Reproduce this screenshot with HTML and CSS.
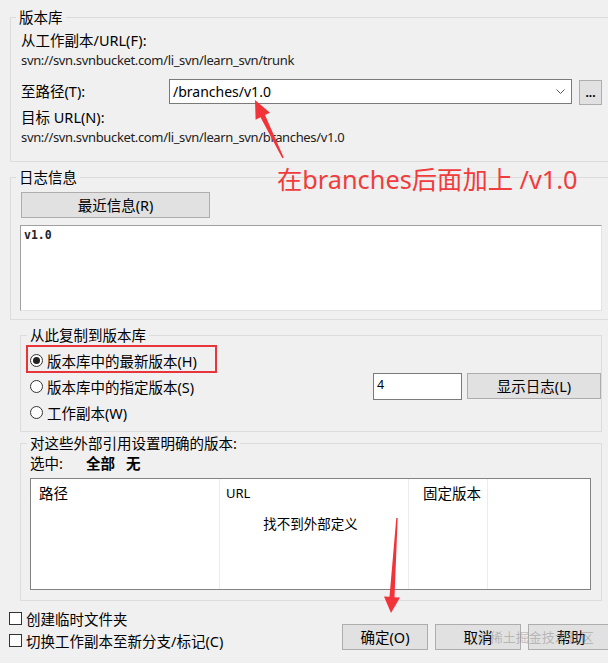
FILE: index.html
```html
<!DOCTYPE html>
<html lang="zh-CN">
<head>
    <meta charset="UTF-8">
    <meta name="viewport" content="width=device-width, initial-scale=1.0">
    <title>分支/标记</title>
    <link rel="stylesheet" href="styles.css">
</head>
<body>
    <div class="group repo">
        <div class="group-title">版本库</div>
        <div class="line first">从工作副本/URL(F):</div>
        <div class="line url">svn://svn.svnbucket.com/li_svn/learn_svn/trunk</div>
        <div class="path-row">
            <div class="path-label">至路径(T):</div>
            <div class="combo">
                <span>/branches/v1.0</span>
                <svg class="chevron" width="9" height="6" viewBox="0 0 9 6"><polyline points="0.5,0.5 4.5,4.5 8.5,0.5" fill="none" stroke="#555" stroke-width="1"/></svg>
            </div>
            <div class="browse">...</div>
        </div>
        <div class="line target">目标 URL(N):</div>
        <div class="line url">svn://svn.svnbucket.com/li_svn/learn_svn/branches/v1.0</div>
    </div>

    <div class="group log">
        <div class="group-title">日志信息</div>
        <button class="btn recent">最近信息(R)</button>
        <div class="memo">v1.0</div>
    </div>

    <div class="group copy">
        <div class="group-title">从此复制到版本库</div>
        <div class="radio-row first">
            <span class="radio checked"></span>版本库中的最新版本(H)
        </div>
        <div class="radio-row">
            <span class="radio"></span>版本库中的指定版本(S)
            <div class="rev">
                <div class="rev-input">4</div>
                <button class="btn show-log">显示日志(L)</button>
            </div>
        </div>
        <div class="radio-row">
            <span class="radio"></span>工作副本(W)
        </div>
    </div>

    <div class="group externals">
        <div class="group-title">对这些外部引用设置明确的版本:</div>
        <div class="select-line">
            <span class="select-label">选中:</span>
            <b class="pick">全部</b>
            <b>无</b>
        </div>
        <div class="list">
            <div class="col c1">路径</div>
            <div class="col c2">URL</div>
            <div class="col c3">固定版本</div>
            <div class="col c4"></div>
            <div class="empty">找不到外部定义</div>
        </div>
    </div>

    <div class="footer">
        <div class="checks">
            <div class="check-row first"><span class="checkbox"></span>创建临时文件夹</div>
            <div class="check-row"><span class="checkbox"></span>切换工作副本至新分支/标记(C)</div>
        </div>
        <div class="actions">
            <button class="btn act">确定(O)</button>
            <button class="btn act">取消</button>
            <button class="btn act">帮助</button>
        </div>
    </div>

    <!-- 标注 -->
    <div class="note">在branches后面加上 /v1.0</div>
    <div class="mark">@稀土掘金技术社区</div>
    <svg class="overlay" width="608" height="663" viewBox="0 0 608 663">
        <rect x="27" y="346" width="189" height="26" fill="none" stroke="#e8353b" stroke-width="2"/>
        <polygon points="255,100 270,112.7 265,115.1 283.7,157.6 282.3,158.3 260.5,117.3 255.6,119.7" fill="#f2343a"/>
        <polygon points="391,613 384,596.5 389.5,596.8 396.3,518 397.7,518 394.5,597.2 400,597.5" fill="#f2343a"/>
    </svg>
</body>
</html>
```

FILE: styles.css
```css
body {
    margin: 0;
    width: 608px;
    height: 663px;
    overflow: hidden;
    position: relative;
    background: #f0f0f0;
    color: #000;
    font-family: "Noto Sans", "Noto Sans CJK SC", sans-serif;
    font-size: 14.5px;
}
.group {
    border: 1px solid #dcdcdc;
}
.group-title {
    width: fit-content;
    height: 20px;
    line-height: 20px;
    margin-top: -11px;
    padding: 0 3px;
    background: #f0f0f0;
    white-space: nowrap;
}
.line {
    height: 20px;
    line-height: 20px;
    white-space: nowrap;
}
.line.url {
    font-size: 13px;
    letter-spacing: -0.35px;
    color: #222;
}

/* 版本库 */
.repo {
    margin: 17px -10px 0 10px;
    padding: 0 0 14px 10px;
}
.repo .group-title {
    margin-left: -5px;
}
.repo .line.first {
    margin-top: 3px;
}
.path-row {
    display: flex;
    align-items: flex-start;
    height: 26px;
    margin-top: 9px;
}
.path-label {
    width: 148px;
    line-height: 24px;
}
.combo {
    box-sizing: border-box;
    width: 403px;
    height: 25px;
    display: flex;
    align-items: center;
    padding: 0 6px 0 3px;
    background: #fff;
    border: 1px solid #7a7a7a;
    font-size: 14px;
}
.chevron {
    margin-left: auto;
}
.browse {
    box-sizing: border-box;
    width: 23px;
    height: 25px;
    margin: 1px 0 0 7px;
    background: #e1e1e1;
    border: 1px solid #adadad;
    text-align: center;
    font-size: 12px;
    font-weight: bold;
    line-height: 24px;
    letter-spacing: 0;
}
.line.target {
    margin-top: 2px;
}

/* 日志信息 */
.log {
    margin: 15px -10px 0 10px;
    padding: 0 0 8px 10px;
}
.log .group-title {
    margin-left: -5px;
}
.btn {
    box-sizing: border-box;
    background: #e1e1e1;
    border: 1px solid #adadad;
    font-family: inherit;
    font-size: 14.5px;
    color: #000;
    padding: 0;
    line-height: 22px;
}
.recent {
    display: block;
    width: 189px;
    height: 26px;
    margin-top: 5px;
}
.memo {
    box-sizing: border-box;
    width: 582px;
    height: 86px;
    margin: 7px 0 0 -1px;
    padding: 1px 3px;
    background: #fff;
    border-top: 1px solid #a0a0a0;
    border-left: 1px solid #a0a0a0;
    border-right: 1px solid #e3e3e3;
    border-bottom: 1px solid #e3e3e3;
    font-family: "DejaVu Sans Mono", monospace;
    font-size: 11.5px;
    font-weight: bold;
    color: #222;
    line-height: 16px;
}

/* 从此复制到版本库 */
.copy {
    box-sizing: border-box;
    width: 582px;
    margin: 15px 0 0 20px;
    padding: 0 0 6px 9px;
}
.copy .group-title,
.externals .group-title {
    margin-left: -3px;
}
.radio-row {
    display: flex;
    align-items: center;
    height: 26px;
    white-space: nowrap;
}
.radio-row.first {
    margin-top: 2px;
}
.radio {
    box-sizing: border-box;
    width: 13px;
    height: 13px;
    margin-right: 4px;
    border: 1px solid #333;
    border-radius: 50%;
    background: #fff;
    display: flex;
    align-items: center;
    justify-content: center;
}
.radio.checked::after {
    content: "";
    width: 7px;
    height: 7px;
    border-radius: 50%;
    background: #222;
}
.rev {
    display: flex;
    align-items: center;
    margin-left: auto;
}
.rev-input {
    box-sizing: border-box;
    width: 89px;
    height: 27px;
    padding-left: 3px;
    background: #fff;
    border: 1px solid #7a7a7a;
    font-size: 12.5px;
    line-height: 22px;
}
.show-log {
    width: 134px;
    height: 26px;
    margin-left: 5px;
}

/* 外部引用 */
.externals {
    box-sizing: border-box;
    width: 582px;
    margin: 11px 0 0 20px;
    padding: 0 0 10px 9px;
}
.select-line {
    display: flex;
    height: 20px;
    line-height: 20px;
}
.select-label {
    width: 56px;
}
.pick {
    margin-right: 11px;
}
.list {
    box-sizing: border-box;
    width: 561px;
    height: 112px;
    margin-top: 5px;
    background: #fff;
    border: 1px solid #828282;
    display: grid;
    grid-template-columns: 189px 189px 79px 1fr;
    grid-template-rows: 28px 34px 1fr;
}
.col {
    grid-row: 1 / -1;
    border-right: 1px solid #ececec;
    line-height: 28px;
}
.c1 {
    grid-column: 1;
    padding-left: 8px;
}
.c2 {
    grid-column: 2;
    padding-left: 6px;
    font-size: 13px;
}
.c3 {
    grid-column: 3;
    padding-left: 14px;
}
.c4 {
    grid-column: 4;
    border-right: none;
}
.empty {
    grid-column: 1 / -1;
    grid-row: 2;
    text-align: center;
    line-height: 34px;
    font-size: 13.5px;
}

/* 底部 */
.footer {
    display: flex;
    align-items: flex-start;
}
.checks {
    padding: 6px 0 0 9px;
}
.check-row {
    display: flex;
    align-items: center;
    height: 22px;
    white-space: nowrap;
}
.checkbox {
    box-sizing: border-box;
    width: 13px;
    height: 13px;
    margin-right: 4px;
    border: 1px solid #333;
    background: #fff;
}
.actions {
    display: flex;
    gap: 7px;
    margin: 23px -6px 0 auto;
}
.act {
    width: 86px;
    height: 26px;
}

/* 标注 */
.note {
    position: absolute;
    left: 277px;
    top: 164px;
    font-size: 25.3px;
    line-height: 30px;
    color: #f03c3c;
    white-space: nowrap;
}
.mark {
    position: absolute;
    left: 478px;
    top: 628px;
    font-size: 13px;
    line-height: 18px;
    color: rgba(140, 140, 140, 0.5);
    white-space: nowrap;
}
.overlay {
    position: absolute;
    left: 0;
    top: 0;
    pointer-events: none;
}
```
